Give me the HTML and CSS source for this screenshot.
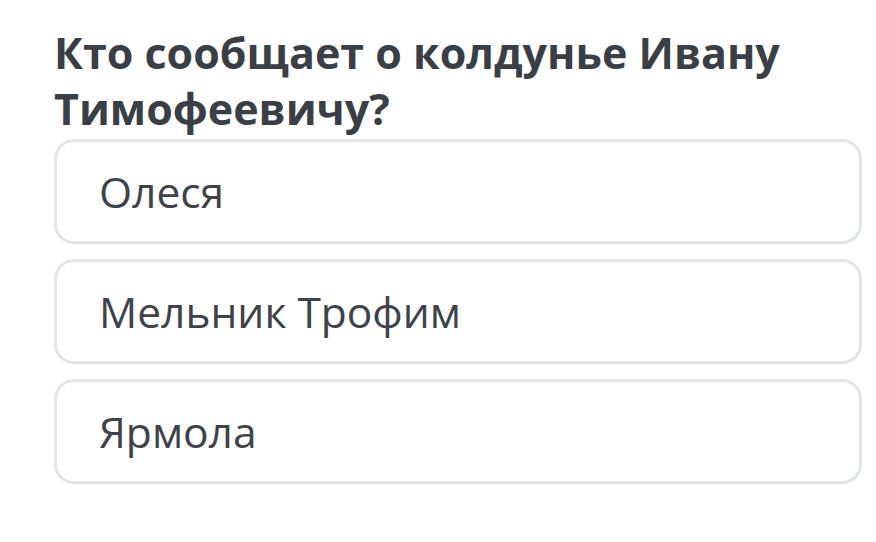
FILE: index.html
```html
<!DOCTYPE html>
<html lang="ru">
<head>
<meta charset="utf-8">
<link rel="stylesheet" href="styles.css">
</head>
<body>
<div class="quiz">
  <h1 class="question">Кто сообщает о колдунье Ивану Тимофеевичу?</h1>
  <div class="options">
    <div class="option">Олеся</div>
    <div class="option">Мельник Трофим</div>
    <div class="option">Ярмола</div>
  </div>
</div>
</body>
</html>
```

FILE: styles.css
```css
html, body {
  margin: 0;
  padding: 0;
  background: #ffffff;
}
body {
  font-family: "Open Sans", "Noto Sans", sans-serif;
}
.quiz {
  padding: 25px 14px 0 54px;
}
.question {
  margin: 0;
  font-size: 43px;
  line-height: 56px;
  font-weight: 700;
  color: #3a3f46;
  max-width: 790px;
}
.options {
  margin-top: 2px;
  display: flex;
  flex-direction: column;
  gap: 15px;
}
.option {
  box-sizing: border-box;
  height: 105px;
  border: 3px solid #e3e6e8;
  border-radius: 20px;
  padding: 0 0 0 42px;
  display: flex;
  align-items: center;
  font-size: 42.5px;
  color: #3e4349;
}
```
